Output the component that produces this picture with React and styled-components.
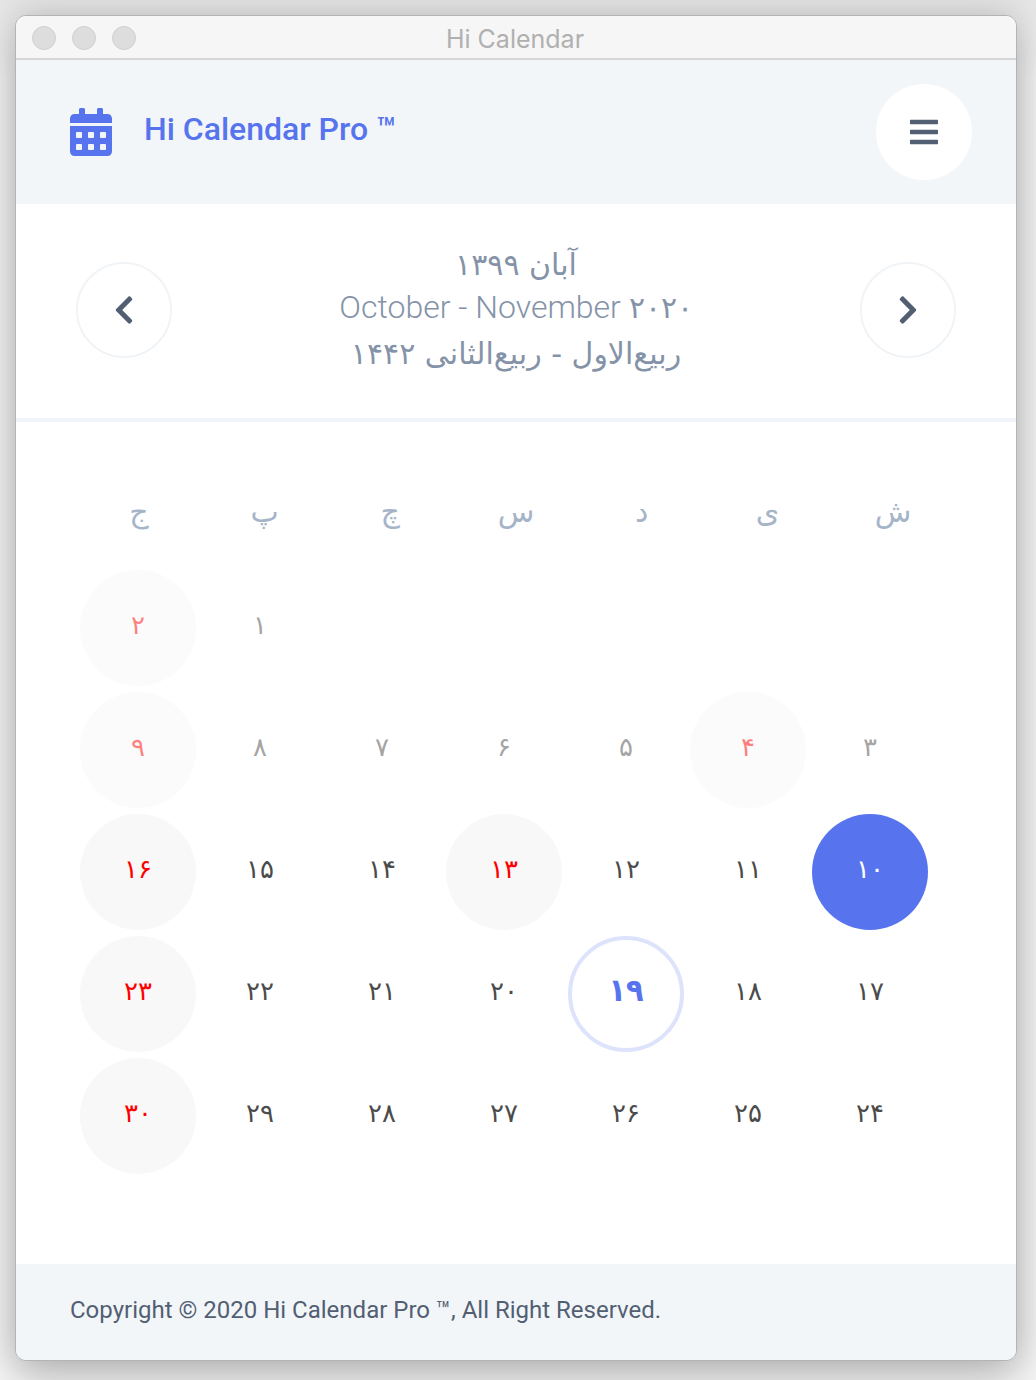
import React, { useState } from "react";
import styled, { createGlobalStyle, css } from "styled-components";
import { FaBars, FaCalendarAlt, FaChevronLeft, FaChevronRight } from "react-icons/fa";

const latin = `Roboto, "DejaVu Sans", sans-serif`;
const persian = `"DejaVu Sans", sans-serif`;

const GlobalStyle = createGlobalStyle`
  *, *::before, *::after { box-sizing: border-box; }
  html {
    height: 100%;
    background: #f6f6f6 linear-gradient(#e6e6e6, #f6f6f6 80px) no-repeat;
  }
  body {
    margin: 0;
    height: 100%;
    font-family: ${latin};
    font-weight: 400;
    color: #525f73;
  }
  #root { height: 100%; }
`;

const Desktop = styled.div`
  display: flex;
  min-height: 100%;
  padding: 15px 19px 19px 15px;
  overflow: hidden;
`;

const Window = styled.div`
  flex: 1;
  display: flex;
  flex-direction: column;
  border: 1px solid #b4b4b4;
  border-radius: 11px;
  overflow: hidden;
  background: #fff;
  box-shadow: 0 0 36px rgba(0, 0, 0, 0.16), 0 18px 44px rgba(0, 0, 0, 0.2);
`;

const TitleBar = styled.div`
  display: grid;
  grid-template-columns: 1fr auto 1fr;
  align-items: center;
  height: 44px;
  padding: 2px 18px 0 16px;
  background: #f6f6f6;
  border-bottom: 2px solid #d6d6d6;
`;

const Lights = styled.div`
  display: flex;
  gap: 16px;
`;

const Light = styled.button`
  width: 24px;
  height: 24px;
  padding: 0;
  border: 1px solid #cfcfcf;
  border-radius: 50%;
  background: #dddddd;
`;

const WindowTitle = styled.span`
  padding-top: 2px;
  font: 400 25px/38px Inter, sans-serif;
  color: #b0b0b0;
`;

const Header = styled.header`
  display: flex;
  align-items: center;
  justify-content: space-between;
  height: 144px;
  padding: 0 44px 0 54px;
  background: #f2f6f9;
`;

const Brand = styled.h1`
  display: flex;
  align-items: center;
  gap: 32px;
  margin: 0;
  font-size: 32px;
  line-height: 48px;
  font-weight: 500;
  color: #5774ee;
`;

const BrandIcon = styled(FaCalendarAlt)`
  width: 42px;
  height: 48px;
`;

const BrandName = styled.span`
  padding-bottom: 6px;
`;

const RoundButton = styled.button`
  display: flex;
  align-items: center;
  justify-content: center;
  width: 96px;
  height: 96px;
  padding: 0;
  border: 2px solid ${(p) => (p.$outlined ? "#f0f4f7" : "#fff")};
  border-radius: 50%;
  background: #fff;
  color: #525f73;
  font-size: 32px;
`;

const MonthBar = styled.section`
  display: flex;
  align-items: center;
  justify-content: space-between;
  height: 218px;
  padding: 0 60px 2px;
  border-bottom: 4px solid #f1f4f9;
`;

const MonthNames = styled.div`
  display: flex;
  flex-direction: column;
  align-items: center;
  padding-bottom: 2px;
  line-height: 44px;
  color: #8593a8;
`;

const PersianLine = styled.span`
  font-family: ${persian};
  font-size: 30px;
`;

const LatinLine = styled.span`
  padding-bottom: 4px;
  font-size: 32px;
  line-height: 40px;
  font-weight: 300;
`;

const Year = styled.span`
  font-family: ${persian};
  font-size: 30px;
`;

const Main = styled.main`
  flex: 1;
  padding: 60px 60px 90px;
`;

const Month = styled.table`
  display: block;
  direction: rtl;
  font-family: ${persian};
  text-align: center;
`;

const WeekDays = styled.thead`
  display: block;
`;

const WeekDayRow = styled.tr`
  display: grid;
  grid-template-columns: repeat(7, 1fr);
`;

const WeekDay = styled.th`
  padding: 0;
  font-size: 30px;
  line-height: 60px;
  font-weight: 400;
  color: #a6b4c8;
`;

const Weeks = styled.tbody`
  display: grid;
  gap: 6px;
  padding: 28px 28px 0 4px;
`;

const Week = styled.tr`
  display: grid;
  grid-template-columns: repeat(7, 1fr);
  gap: 6px;
`;

const DayCell = styled.td`
  padding: 0;
  aspect-ratio: 1;
`;

const Day = styled.button`
  width: 100%;
  height: 100%;
  padding: 0 0 6px;
  border: 4px solid transparent;
  border-radius: 50%;
  background-color: transparent;
  font-family: inherit;
  font-size: 26px;
  line-height: 40px;
  color: #4b4b4b;
  ${(p) => p.$holiday && css`
    background-color: #f8f8f8;
    color: #ff0000;
  `}
  ${(p) => p.$past && css`
    opacity: 0.5;
  `}
  ${(p) => p.$today && css`
    padding-bottom: 8px;
    border-color: #dde3fb;
    color: #5774ee;
    font-family: "DejaVu Sans Condensed", ${persian};
    font-size: 32px;
    font-weight: 700;
  `}
  ${(p) => p.$selected && css`
    background-color: #5774ee;
    color: #fff;
  `}
`;

const Footer = styled.footer`
  padding: 24px 54px 28px;
  background: #f2f6f9;
`;

const Copyright = styled.p`
  margin: 0;
  font-size: 24px;
  line-height: 44px;
`;

const weekDays = ["ش", "ی", "د", "س", "چ", "پ", "ج"];
const holidays = [2, 4, 9, 13, 16, 23, 30];
const weeks = [
  [null, null, null, null, null, 1, 2],
  [3, 4, 5, 6, 7, 8, 9],
  [10, 11, 12, 13, 14, 15, 16],
  [17, 18, 19, 20, 21, 22, 23],
  [24, 25, 26, 27, 28, 29, 30],
];
const today = 19;

const toPersian = (n) => String(n).replace(/\d/g, (d) => "۰۱۲۳۴۵۶۷۸۹"[d]);

export default function App() {
  const [selected, setSelected] = useState(10);
  return (
    <>
      <GlobalStyle />
      <Desktop>
        <Window>
          <TitleBar>
            <Lights>
              <Light aria-label="Close" />
              <Light aria-label="Minimize" />
              <Light aria-label="Zoom" />
            </Lights>
            <WindowTitle>Hi Calendar</WindowTitle>
          </TitleBar>
          <Header>
            <Brand>
              <BrandIcon />
              <BrandName>Hi Calendar Pro ™</BrandName>
            </Brand>
            <RoundButton aria-label="Menu">
              <FaBars />
            </RoundButton>
          </Header>
          <MonthBar>
            <RoundButton $outlined aria-label="Previous month">
              <FaChevronLeft />
            </RoundButton>
            <MonthNames>
              <PersianLine dir="rtl">آبان ۱۳۹۹</PersianLine>
              <LatinLine>
                October - November <Year>۲۰۲۰</Year>
              </LatinLine>
              <PersianLine dir="rtl">ربیع‌الاول - ربیع‌الثانی ۱۴۴۲</PersianLine>
            </MonthNames>
            <RoundButton $outlined aria-label="Next month">
              <FaChevronRight />
            </RoundButton>
          </MonthBar>
          <Main>
            <Month>
              <WeekDays>
                <WeekDayRow>
                  {weekDays.map((name) => (
                    <WeekDay key={name} scope="col">{name}</WeekDay>
                  ))}
                </WeekDayRow>
              </WeekDays>
              <Weeks>
                {weeks.map((week, w) => (
                  <Week key={w}>
                    {week.map((day, d) => (
                      <DayCell key={d}>
                        {day && (
                          <Day
                            $holiday={holidays.includes(day)}
                            $past={day < 10}
                            $today={day === today}
                            $selected={day === selected}
                            onClick={() => setSelected(day)}
                          >
                            {toPersian(day)}
                          </Day>
                        )}
                      </DayCell>
                    ))}
                  </Week>
                ))}
              </Weeks>
            </Month>
          </Main>
          <Footer>
            <Copyright>Copyright © 2020 Hi Calendar Pro ™, All Right Reserved.</Copyright>
          </Footer>
        </Window>
      </Desktop>
    </>
  );
}
